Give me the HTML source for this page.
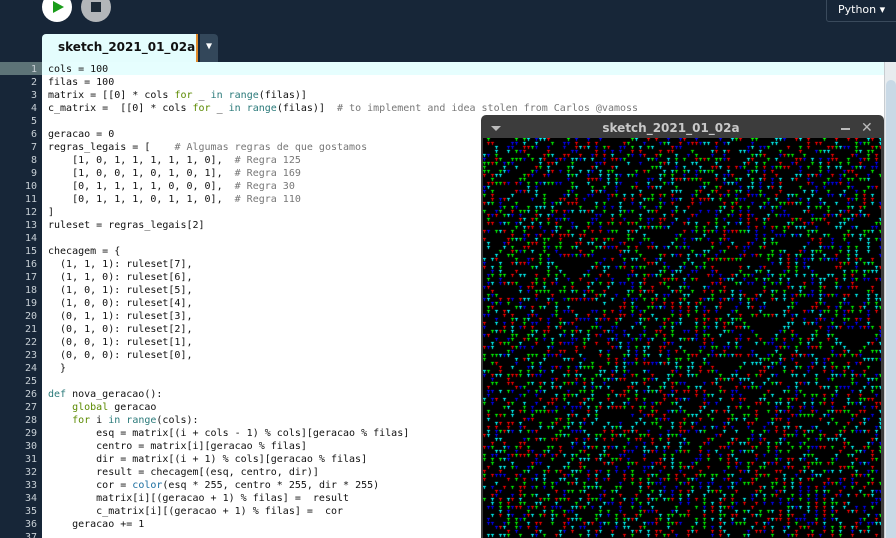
<!DOCTYPE html>
<html><head><meta charset="utf-8"><style>
*{margin:0;padding:0;box-sizing:border-box}
html,body{width:896px;height:538px;overflow:hidden}
body{background:#172638;position:relative;font-family:"DejaVu Sans Mono",monospace}
.abs{position:absolute}
#run{left:42px;top:-8px;width:30px;height:30px;border-radius:50%;background:#fff}
#run:after{content:"";position:absolute;left:11px;top:9px;border-left:11px solid #1a9c1a;border-top:6px solid transparent;border-bottom:6px solid transparent}
#stop{left:81px;top:-8px;width:30px;height:30px;border-radius:50%;background:#b3b6b9}
#stop:after{content:"";position:absolute;left:10px;top:10px;width:10px;height:10px;background:#1d2a36}
#lang{left:826px;top:-4px;width:80px;height:26px;border:1px solid #3a4a5c;border-radius:3px;color:#fff;font:11px "DejaVu Sans",sans-serif;padding:6px 0 0 11px}
#tab{left:42px;top:34px;width:156px;height:28px;background:#e4fdfd;border-radius:4px 0 0 0;font:bold 12px "DejaVu Sans",sans-serif;color:#111;padding:6px 0 0 16px;border-right:2px solid #e08a2a;white-space:nowrap}
#dd{left:200px;top:34px;width:18px;height:28px;background:#33475a;border-radius:0 4px 0 0;color:#fff;font-size:10px;text-align:center;padding-top:7px}
#gut{left:0;top:62px;width:42px;height:476px;background:#172638}
#ed{left:42px;top:62px;width:842px;height:476px;background:#fff}
#hl{left:42px;top:62px;width:842px;height:13px;background:#e6fefe}
#ghl{left:0;top:62px;width:42px;height:13px;background:#5d7377}
#nums{left:0;top:63px;width:37px;text-align:right;color:#c8d0d6;font-size:10px;line-height:13px;white-space:pre}
#code{left:48px;top:63px;font-size:10px;line-height:13px;white-space:pre;color:#111}
.k{color:#5b8a00}.c{color:#777}.b{color:#2b7a7a}.f{color:#1a6ea0}
#sb{left:884px;top:62px;width:12px;height:476px;background:#e8ecef;border-left:1px solid #c8ccd0}
#thumb{left:886px;top:80px;width:10px;height:458px;background:#c9d9e6;border-radius:5px 5px 0 0}
#win{left:481px;top:115px;width:403px;height:423px;background:#3c3c3c;border-radius:5px 5px 0 0}
#wt{left:481px;top:121px;width:380px;text-align:center;color:#c8c8c8;font:bold 12px "DejaVu Sans",sans-serif}
canvas{position:absolute;left:483px;top:138px}
</style></head><body>
<div class="abs" id="run"></div><div class="abs" id="stop"></div>
<div class="abs" id="lang">Python ▾</div>
<div class="abs" id="tab">sketch_2021_01_02a</div><div class="abs" id="dd">▼</div>
<div class="abs" id="gut"></div><div class="abs" id="ed"></div><div class="abs" id="hl"></div><div class="abs" id="ghl"></div>
<div class="abs" id="nums">1
2
3
4
5
6
7
8
9
10
11
12
13
14
15
16
17
18
19
20
21
22
23
24
25
26
27
28
29
30
31
32
33
34
35
36
37</div>
<div class="abs" id="code">cols = 100
filas = 100
matrix = [[0] * cols <span class="k">for</span> _ <span class="b">in</span> <span class="b">range</span>(filas)]
c_matrix =  [[0] * cols <span class="k">for</span> _ <span class="b">in</span> <span class="b">range</span>(filas)]  <span class="c"># to implement and idea stolen from Carlos @vamoss</span>

geracao = 0
regras_legais = [    <span class="c"># Algumas regras de que gostamos</span>
    [1, 0, 1, 1, 1, 1, 1, 0],  <span class="c"># Regra 125</span>
    [1, 0, 0, 1, 0, 1, 0, 1],  <span class="c"># Regra 169</span>
    [0, 1, 1, 1, 1, 0, 0, 0],  <span class="c"># Regra 30</span>
    [0, 1, 1, 1, 0, 1, 1, 0],  <span class="c"># Regra 110</span>
]
ruleset = regras_legais[2]

checagem = {
  (1, 1, 1): ruleset[7],
  (1, 1, 0): ruleset[6],
  (1, 0, 1): ruleset[5],
  (1, 0, 0): ruleset[4],
  (0, 1, 1): ruleset[3],
  (0, 1, 0): ruleset[2],
  (0, 0, 1): ruleset[1],
  (0, 0, 0): ruleset[0],
  }

<span class="b">def</span> nova_geracao():
    <span class="k">global</span> geracao
    <span class="k">for</span> i <span class="b">in</span> <span class="b">range</span>(cols):
        esq = matrix[(i + cols - 1) % cols][geracao % filas]
        centro = matrix[i][geracao % filas]
        dir = matrix[(i + 1) % cols][geracao % filas]
        result = checagem[(esq, centro, dir)]
        cor = <span class="f">color</span>(esq * 255, centro * 255, dir * 255)
        matrix[i][(geracao + 1) % filas] =  result
        c_matrix[i][(geracao + 1) % filas] =  cor
    geracao += 1
</div>
<div class="abs" id="sb"></div><div class="abs" id="thumb"></div>
<div class="abs" id="win"></div>
<div class="abs" style="left:491px;top:126px;border-top:5px solid #bbb;border-left:5px solid transparent;border-right:5px solid transparent"></div>
<div class="abs" id="wt">sketch_2021_01_02a</div>
<div class="abs" style="left:841px;top:128px;width:9px;height:2px;background:#bbb"></div>
<div class="abs" style="left:861px;top:120px;color:#bbb;font:bold 14px 'DejaVu Sans',sans-serif">✕</div>
<canvas id="cv" width="398" height="400"></canvas>
<script>
var c=document.getElementById('cv').getContext('2d');c.fillStyle='#000';c.fillRect(0,0,398,400);
var s=7;function r(){s=(s*1103515245+12345)%2147483648;return s/2147483648;}
var pal=['#f00','#0f0','#00f','#0ff'];
var row=[];for(var x=0;x<100;x++)row.push(r()<0.5?1:0);
for(var y=0;y<100;y++){var nr=[];for(var x=0;x<100;x++){var a=row[(x+99)%100],b=row[x],d=row[(x+1)%100];
if(b&&r()<0.8){c.fillStyle=pal[Math.floor(r()*4)];c.fillRect(x*4,y*4,3,1);c.fillRect(x*4+1,y*4+1,1,2);}
nr.push(a^(b|d));}row=nr;}
</script>
</body></html>
